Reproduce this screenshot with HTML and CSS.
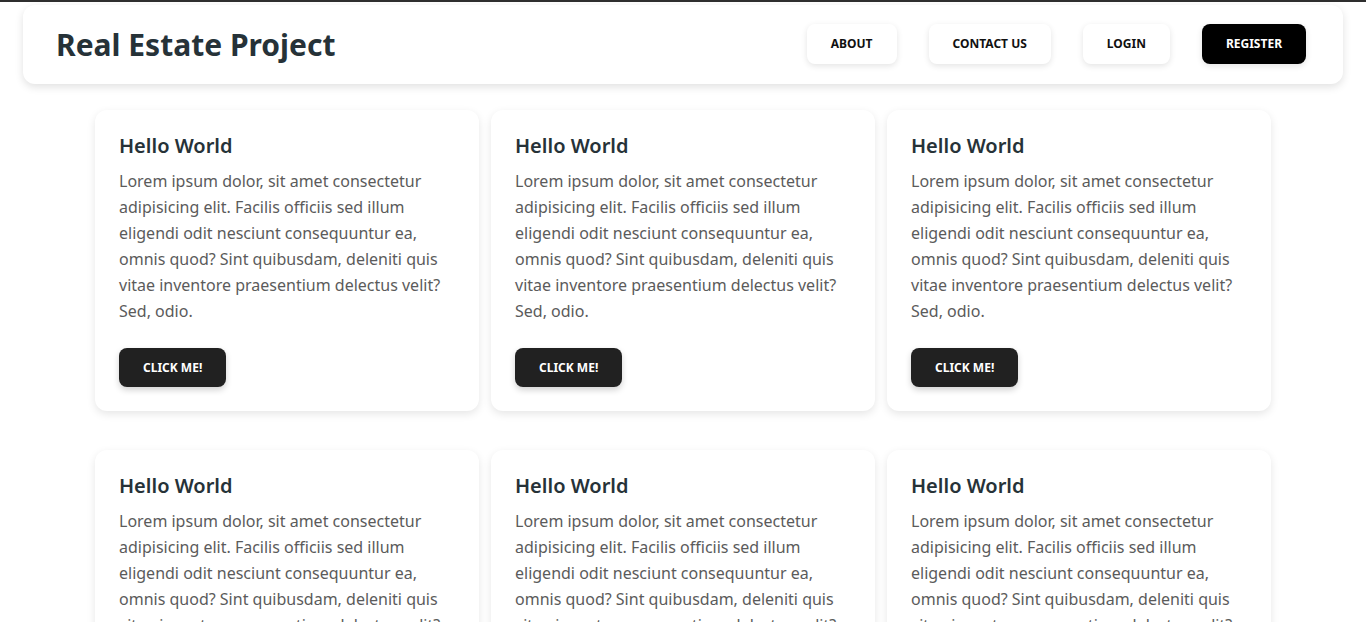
FILE: index.html
```html
<!DOCTYPE html>
<html lang="en">
<head>
<meta charset="utf-8">
<title>Real Estate Project</title>
<link rel="stylesheet" href="styles.css">
</head>
<body>
<header class="navbar">
  <h1 class="brand">Real Estate Project</h1>
  <nav class="nav">
    <a class="nav-btn" href="#">About</a>
    <a class="nav-btn" href="#">Contact us</a>
    <a class="nav-btn" href="#">Login</a>
    <a class="nav-btn nav-btn-dark" href="#">Register</a>
  </nav>
</header>
<main class="grid">
  <article class="card"><h2 class="card-title">Hello World</h2><p class="card-text">Lorem ipsum dolor, sit amet consectetur adipisicing elit. Facilis officiis sed illum eligendi odit nesciunt consequuntur ea, omnis quod? Sint quibusdam, deleniti quis vitae inventore praesentium delectus velit? Sed, odio.</p><button class="card-btn">Click me!</button></article>
  <article class="card"><h2 class="card-title">Hello World</h2><p class="card-text">Lorem ipsum dolor, sit amet consectetur adipisicing elit. Facilis officiis sed illum eligendi odit nesciunt consequuntur ea, omnis quod? Sint quibusdam, deleniti quis vitae inventore praesentium delectus velit? Sed, odio.</p><button class="card-btn">Click me!</button></article>
  <article class="card"><h2 class="card-title">Hello World</h2><p class="card-text">Lorem ipsum dolor, sit amet consectetur adipisicing elit. Facilis officiis sed illum eligendi odit nesciunt consequuntur ea, omnis quod? Sint quibusdam, deleniti quis vitae inventore praesentium delectus velit? Sed, odio.</p><button class="card-btn">Click me!</button></article>
  <article class="card"><h2 class="card-title">Hello World</h2><p class="card-text">Lorem ipsum dolor, sit amet consectetur adipisicing elit. Facilis officiis sed illum eligendi odit nesciunt consequuntur ea, omnis quod? Sint quibusdam, deleniti quis vitae inventore praesentium delectus velit? Sed, odio.</p><button class="card-btn">Click me!</button></article>
  <article class="card"><h2 class="card-title">Hello World</h2><p class="card-text">Lorem ipsum dolor, sit amet consectetur adipisicing elit. Facilis officiis sed illum eligendi odit nesciunt consequuntur ea, omnis quod? Sint quibusdam, deleniti quis vitae inventore praesentium delectus velit? Sed, odio.</p><button class="card-btn">Click me!</button></article>
  <article class="card"><h2 class="card-title">Hello World</h2><p class="card-text">Lorem ipsum dolor, sit amet consectetur adipisicing elit. Facilis officiis sed illum eligendi odit nesciunt consequuntur ea, omnis quod? Sint quibusdam, deleniti quis vitae inventore praesentium delectus velit? Sed, odio.</p><button class="card-btn">Click me!</button></article>
</main>
</body>
</html>
```
FILE: styles.css
```css
* { box-sizing: border-box; }

html, body {
  margin: 0;
  padding: 0;
  background: #ffffff;
}

body {
  border-top: 2px solid #2e2e2e;
  font-family: "Noto Sans", "Open Sans", sans-serif;
  color: #263238;
}

.navbar {
  margin: 3px 23px 0;
  height: 79px;
  display: flex;
  align-items: center;
  justify-content: space-between;
  padding: 0 37px 0 33px;
  background: #ffffff;
  border-radius: 12px;
  box-shadow: 0 3px 8px rgba(0, 0, 0, 0.12);
}

.brand {
  margin: 0;
  font-size: 30px;
  line-height: 40px;
  font-weight: 700;
  color: #263238;
}

.nav {
  display: flex;
  gap: 32px;
  margin-top: -2px;
}

.nav-btn {
  display: block;
  height: 40px;
  line-height: 40px;
  padding: 0 24px;
  border-radius: 8px;
  background: #ffffff;
  color: #111111;
  font-size: 12px;
  font-weight: 700;
  text-transform: uppercase;
  text-decoration: none;
  box-shadow: 0 2px 6px rgba(0, 0, 0, 0.11);
}

.nav-nav { display: none; }

.nav-btn-dark {
  background: #000000;
  color: #ffffff;
}

.grid {
  width: 1176px;
  margin: 26px auto 0;
  display: grid;
  grid-template-columns: repeat(3, 384px);
  column-gap: 12px;
  row-gap: 39px;
}

.card {
  padding: 24px;
  background: #ffffff;
  border-radius: 12px;
  box-shadow: 0 3px 8px rgba(0, 0, 0, 0.1);
}

.card-title {
  margin: 0 0 10px;
  font-size: 20px;
  line-height: 24px;
  font-weight: 600;
  color: #263238;
}

.card-text {
  margin: 0 0 24px;
  font-size: 16px;
  line-height: 26px;
  color: #5b5b5b;
}

.card-btn {
  display: block;
  height: 39px;
  padding: 0 24px;
  border: none;
  border-radius: 8px;
  background: #212121;
  color: #ffffff;
  font-family: "Noto Sans", "Open Sans", sans-serif;
  font-size: 12px;
  font-weight: 700;
  text-transform: uppercase;
  box-shadow: 0 3px 6px rgba(0, 0, 0, 0.18);
}
```
